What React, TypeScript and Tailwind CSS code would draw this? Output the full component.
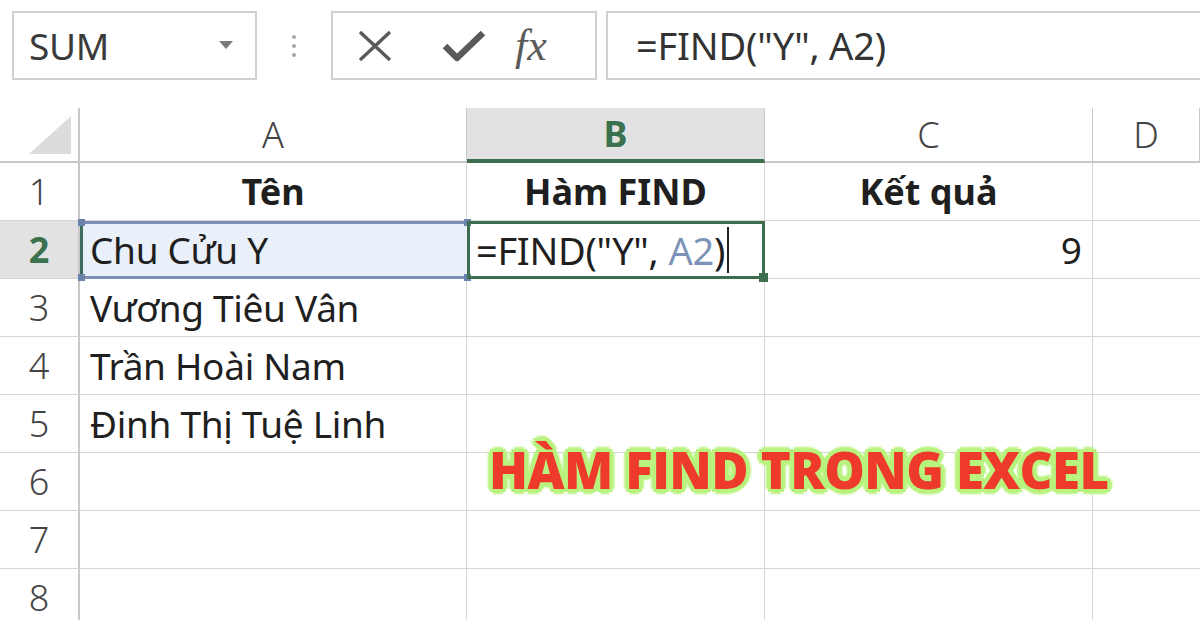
import React from "react";

const FONT = "font-['Noto_Sans','Open_Sans',sans-serif]";

const ROWS: { a: string; b?: React.ReactNode; c?: string; bold?: boolean }[] = [
  { a: "Tên", b: "Hàm FIND", c: "Kết quả", bold: true },
  { a: "Chu Cửu Y", c: "9" },
  { a: "Vương Tiêu Vân" },
  { a: "Trần Hoài Nam" },
  { a: "Đinh Thị Tuệ Linh" },
  { a: "" },
  { a: "" },
  { a: "" },
];

function Handle({ className }: { className: string }) {
  return <span className={`absolute h-[7px] w-[7px] ${className}`} />;
}

function Toolbar() {
  return (
    <div className="flex h-[108px] items-start pt-[11px] pl-[12px]">
      <div className="flex h-[69px] w-[245px] items-center justify-between border-2 border-[#d0d0d0] pl-[15px] pr-[22px]">
        <span className="text-[37px] tracking-[-0.3px] text-[#3a3a3a]">SUM</span>
        <svg width="14" height="9" viewBox="0 0 14 9">
          <polygon points="0,0 14,0 7,8" fill="#7a7a7a" />
        </svg>
      </div>
      <div className="flex h-[69px] w-[74px] flex-col items-center justify-center gap-[5px]">
        <span className="h-[4px] w-[4px] rounded-full bg-[#a6a6a6]" />
        <span className="h-[4px] w-[4px] rounded-full bg-[#a6a6a6]" />
        <span className="h-[4px] w-[4px] rounded-full bg-[#a6a6a6]" />
      </div>
      <div className="flex h-[69px] w-[266px] items-center border-2 border-[#d0d0d0] pl-[24px]">
        <svg width="36" height="34" viewBox="0 0 36 34">
          <path d="M3 3 L33 31 M33 3 L3 31" stroke="#5a5a5a" strokeWidth="3.4" fill="none" />
        </svg>
        <svg width="46" height="36" viewBox="0 0 46 36" className="ml-[48px]">
          <path d="M4 18 L16 30 L42 5" stroke="#5a5a5a" strokeWidth="6.5" fill="none" strokeLinejoin="round" />
        </svg>
        <span className="ml-[28px] font-['Liberation_Serif',serif] text-[44px] italic leading-none text-[#5a5a5a]">
          fx
        </span>
      </div>
      <div className="ml-[9px] flex h-[69px] flex-1 items-center border-2 border-r-0 border-[#d0d0d0] pl-[28px]">
        <span className="text-[38px] tracking-[-0.2px] text-[#333]">=FIND("Y", A2)</span>
      </div>
    </div>
  );
}

export default function App() {
  const colHeaders = ["A", "B", "C", "D"];
  return (
    <div className={`relative h-[620px] w-[1200px] overflow-hidden bg-white ${FONT}`}>
      <Toolbar />

      <div className="grid grid-cols-[80px_387px_298px_328px_1fr] grid-rows-[55px_repeat(8,58px)]">
        {/* corner */}
        <div className="flex items-end justify-end border-r-2 border-b-2 border-[#c8c8c8] pr-[7px] pb-[7px]">
          <svg width="42" height="38" viewBox="0 0 42 38">
            <polygon points="42,0 42,38 0,38" fill="#dcdcdc" />
          </svg>
        </div>
        {colHeaders.map((h) => (
          <div
            key={h}
            className={
              h === "B"
                ? "flex items-center justify-center border-r border-b-[4px] border-r-[#c8c8c8] border-b-[#3d6e4e] bg-[#e2e2e2] text-[36px] font-bold text-[#3a7250]"
                : "flex items-center justify-center border-r border-b-2 border-[#c8c8c8] text-[36px] font-light text-[#444]"
            }
          >
            {h}
          </div>
        ))}

        {ROWS.map((row, i) => {
          const n = i + 1;
          const active = n === 2;
          return (
            <React.Fragment key={n}>
              <div
                className={
                  active
                    ? "flex items-center justify-center border-r-2 border-b border-r-[#c8c8c8] border-b-[#d6d6d6] bg-[#e2e2e2] text-[36px] font-bold text-[#3a7250]"
                    : "flex items-center justify-center border-r-2 border-b border-r-[#c8c8c8] border-b-[#d6d6d6] text-[36px] font-light text-[#444]"
                }
              >
                {n}
              </div>

              {/* column A */}
              {active ? (
                <div className="relative flex items-center border-y-[3px] border-l-[3px] border-y-[#7d8db8] border-l-[#3f6a5e] bg-[#eaf0f9] pl-[7px] text-[37px] tracking-[-0.3px] text-[#1f1f1f]">
                  {row.a}
                  <Handle className="-top-[5px] -left-[5px] bg-[#6b82ad]" />
                  <Handle className="-bottom-[5px] -left-[5px] bg-[#6b82ad]" />
                  <Handle className="-top-[5px] -right-[4px] bg-[#6b82ad]" />
                  <Handle className="-bottom-[5px] -right-[4px] bg-[#6b82ad]" />
                </div>
              ) : (
                <div
                  className={
                    row.bold
                      ? "flex items-center justify-center border-r border-b border-[#d6d6d6] text-[36px] font-bold text-[#1f1f1f]"
                      : "flex items-center border-r border-b border-[#d6d6d6] pl-[10px] text-[37px] tracking-[-0.3px] text-[#1f1f1f]"
                  }
                >
                  {row.a}
                </div>
              )}

              {/* column B */}
              {active ? (
                <div className="relative flex items-center border-[3px] border-[#3d6e4e] pl-[6px] text-[38px] tracking-[-0.3px] text-[#1f1f1f]">
                  <span>=FIND("Y", </span>
                  <span className="ml-[10px] text-[#7d93b8]">A2</span>
                  <span>)</span>
                  <span className="ml-[2px] h-[46px] w-[2px] bg-[#222]" />
                  <Handle className="-bottom-[6px] -right-[6px] h-[9px] w-[9px] bg-[#3d6e4e]" />
                </div>
              ) : (
                <div
                  className={
                    row.bold
                      ? "flex items-center justify-center border-r border-b border-[#d6d6d6] text-[36px] font-bold text-[#1f1f1f]"
                      : "border-r border-b border-[#d6d6d6]"
                  }
                >
                  {row.b}
                </div>
              )}

              {/* column C */}
              <div
                className={
                  row.bold
                    ? "flex items-center justify-center border-r border-b border-[#d6d6d6] text-[36px] font-bold text-[#1f1f1f]"
                    : "flex items-center justify-end border-r border-b border-[#d6d6d6] pr-[10px] text-[37px] text-[#1f1f1f]"
                }
              >
                {row.c}
              </div>

              {/* column D */}
              <div className="border-b border-[#d6d6d6]" />
            </React.Fragment>
          );
        })}
      </div>

      <div className="absolute top-[444px] left-[489px] font-['Open_Sans',sans-serif] text-[51px] leading-none font-extrabold tracking-[-0.6px] text-[#ee3a2a] [text-shadow:0_0_3px_#b8f37e,3px_0_0_#b8f37e,-3px_0_0_#b8f37e,0_3px_0_#b8f37e,0_-3px_0_#b8f37e,3px_3px_0_#b8f37e,-3px_3px_0_#b8f37e,3px_-3px_0_#b8f37e,-3px_-3px_0_#b8f37e,5px_0_2px_#b8f37e,-5px_0_2px_#b8f37e,0_5px_2px_#b8f37e,0_-5px_2px_#b8f37e]">
        HÀM FIND TRONG EXCEL
      </div>
    </div>
  );
}
